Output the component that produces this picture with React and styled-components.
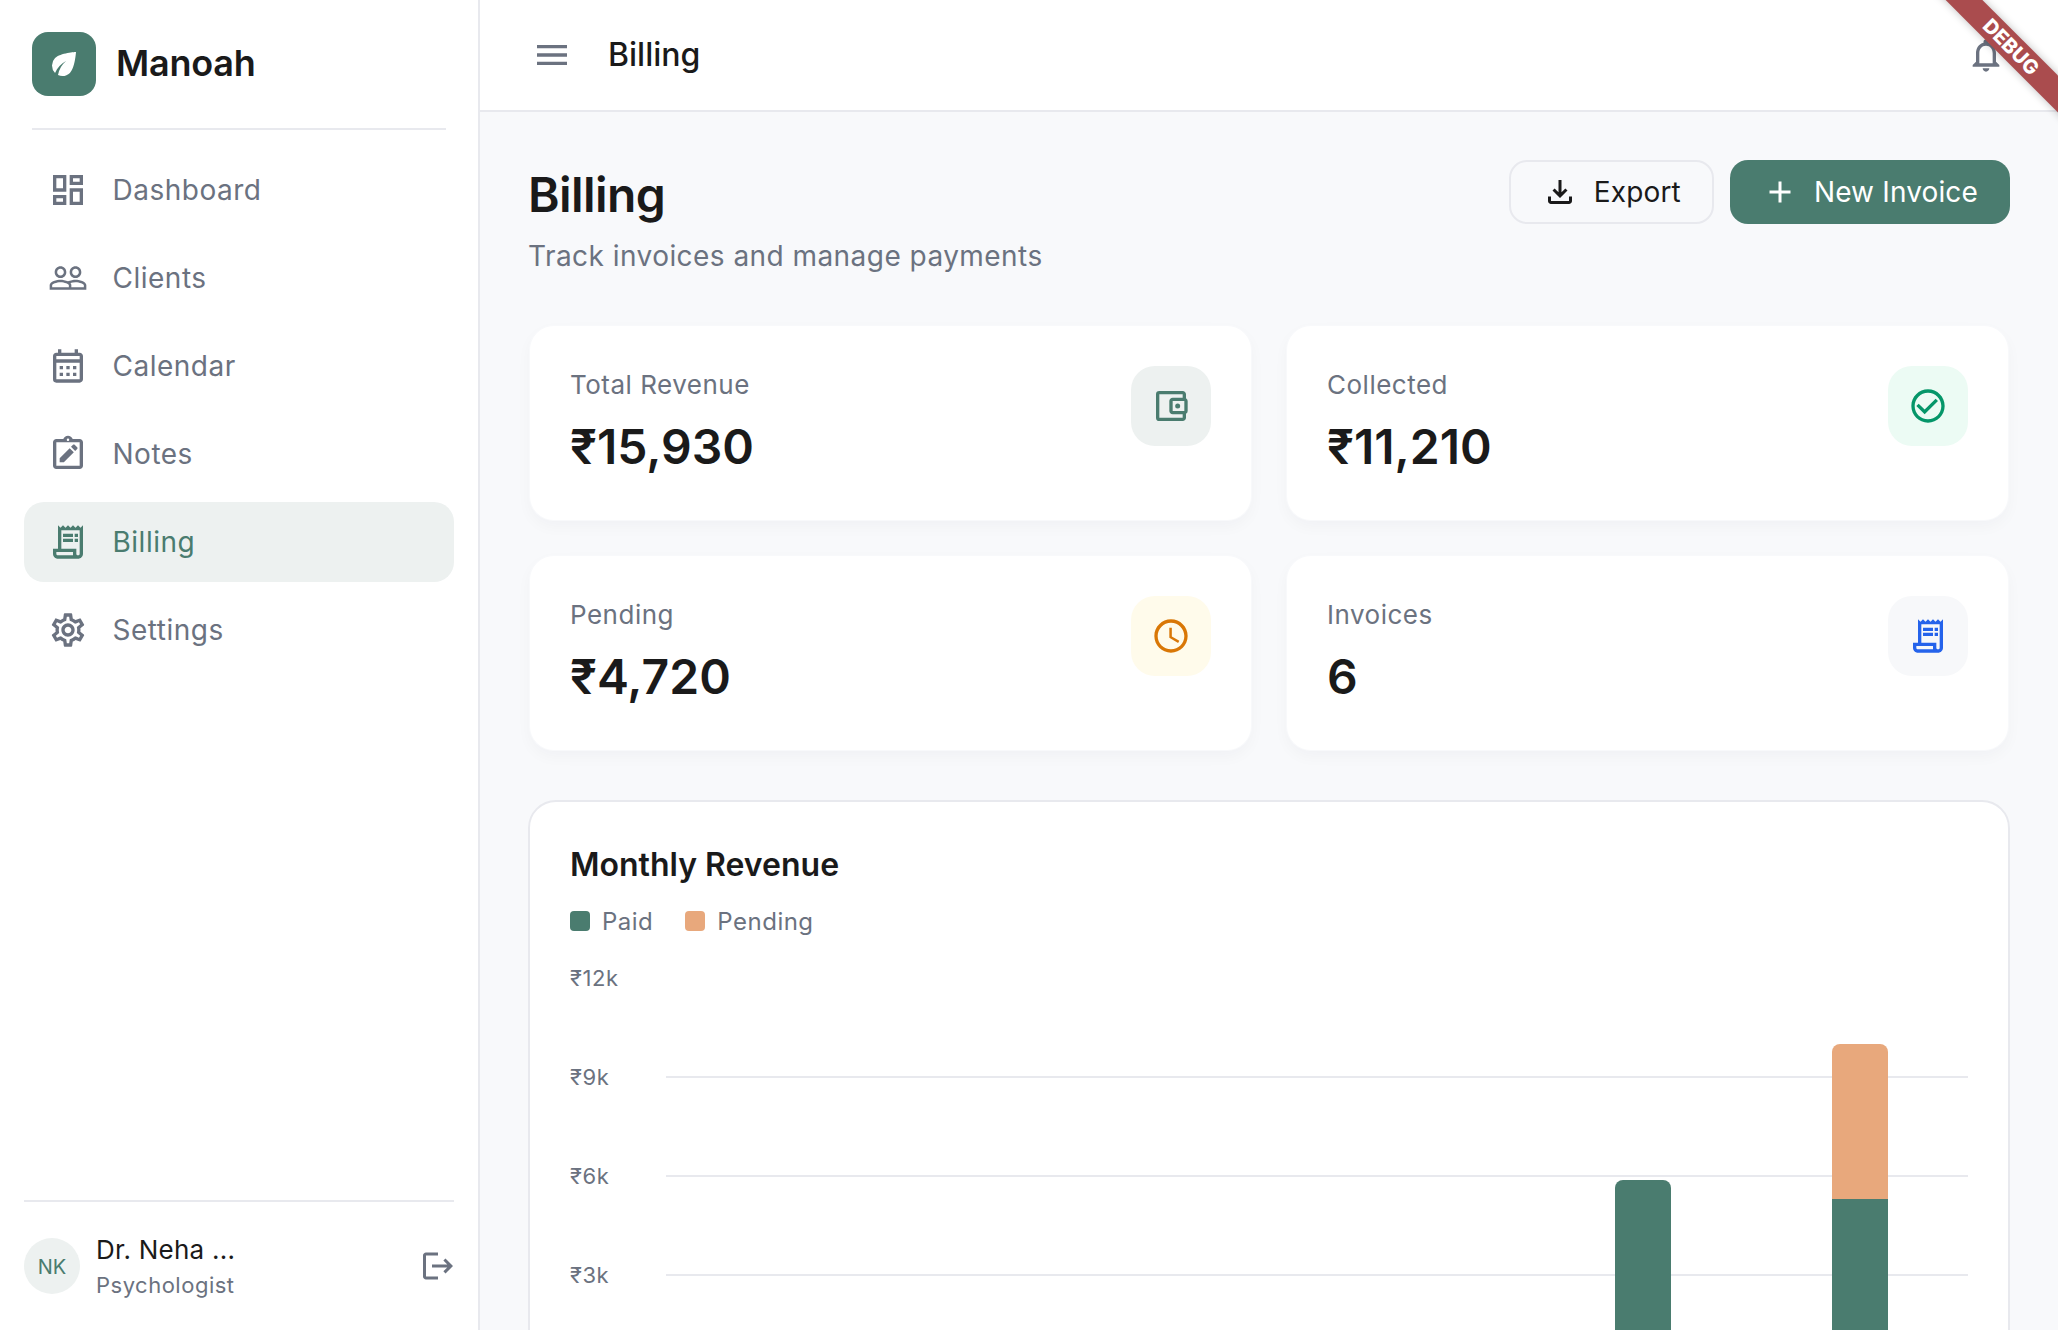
import React from 'react';
import styled, { createGlobalStyle } from 'styled-components';
import {
  MdOutlineDashboard,
  MdPeopleOutline,
  MdOutlineCalendarMonth,
  MdOutlineReceiptLong,
  MdOutlineSettings,
  MdLogout,
  MdMenu,
  MdOutlineNotifications,
  MdOutlineFileDownload,
  MdAdd,
  MdOutlineAccountBalanceWallet,
  MdCheckCircleOutline,
  MdAccessTime,
  MdEco,
} from 'react-icons/md';

const GlobalStyle = createGlobalStyle`
  html, body { margin: 0; padding: 0; background: #f8f9fb; }
  * { box-sizing: border-box; }
  body { font-family: Inter, "Noto Sans", sans-serif; color: #1a1a1a; }
`;

const Shell = styled.div`
  position: relative;
  display: flex;
  width: 100vw;
  height: 100vh;
  overflow: hidden;
`;

const Sidebar = styled.aside`
  flex: 0 0 480px;
  display: flex;
  flex-direction: column;
  background: #fff;
  border-right: 2px solid #e8e9ee;
`;

const Brand = styled.div`
  display: flex;
  align-items: center;
  gap: 20px;
  margin: 0 32px;
  padding: 32px 0;
  border-bottom: 2px solid #e8e9ee;
  height: 130px;
`;

const LogoMark = styled.div`
  width: 64px;
  height: 64px;
  border-radius: 16px;
  background: #4a7c6f;
  color: #fff;
  display: flex;
  align-items: center;
  justify-content: center;
  font-size: 36px;
`;

const BrandName = styled.span`
  margin-bottom: 2px;
  font-size: 36px;
  font-weight: 600;
  letter-spacing: -0.2px;
  color: #1a1a1a;
`;

const Nav = styled.nav`
  flex: 1;
  display: flex;
  flex-direction: column;
  gap: 8px;
  padding: 20px 24px;
`;

const NavItem = styled.a`
  height: 80px;
  display: flex;
  align-items: center;
  gap: 24.5px;
  padding: 0 24px;
  border-radius: 20px;
  font-size: 28px;
  letter-spacing: 0.5px;
  color: ${({ $active }) => ($active ? '#4a7c6f' : '#6b7280')};
  background: ${({ $active }) => ($active ? '#edf1f0' : 'transparent')};
  svg {
    flex: 0 0 40px;
  }
`;

const UserFooter = styled.div`
  flex: 0 0 130px;
  margin: 0 24px;
  border-top: 2px solid #e8e9ee;
  display: flex;
  align-items: center;
  gap: 16px;
`;

const Avatar = styled.div`
  flex: 0 0 56px;
  height: 56px;
  border-radius: 50%;
  background: #edf1f0;
  color: #4a7c6f;
  font-size: 20px;
  padding-top: 1px;
  display: flex;
  align-items: center;
  justify-content: center;
`;

const UserText = styled.div`
  flex: 1;
  display: flex;
  flex-direction: column;
  gap: 3px;
  padding-top: 1px;
`;

const UserName = styled.div`
  font-size: 26px;
  line-height: 34px;
  letter-spacing: 0.25px;
  color: #1a1a1a;
`;

const UserRole = styled.div`
  font-size: 22px;
  line-height: 30px;
  letter-spacing: 0.5px;
  color: #6b7280;
`;

const LogoutButton = styled.button`
  margin-right: -2px;
  border: 0;
  background: none;
  padding: 0;
  display: flex;
  color: #6b7280;
`;

const Main = styled.main`
  flex: 1;
  min-width: 0;
  display: flex;
  flex-direction: column;
`;

const TopBar = styled.header`
  flex: 0 0 112px;
  display: flex;
  align-items: center;
  padding: 0 52px;
  background: #fff;
  border-bottom: 2px solid #e8e9ee;
  color: #6b7280;
`;

const TopTitle = styled.h2`
  flex: 1;
  margin: 0 0 2px 36px;
  font-size: 32px;
  font-weight: 500;
  color: #1a1a1a;
`;

const Content = styled.div`
  flex: 1;
  padding: 48px 48px 0;
  background: #f8f9fb;
`;

const PageHeader = styled.div`
  display: flex;
  justify-content: space-between;
  align-items: flex-start;
  margin-bottom: 48px;
`;

const PageTitle = styled.h1`
  margin: 1px 0 0;
  font-size: 48px;
  line-height: 68px;
  font-weight: 600;
  letter-spacing: -0.6px;
  color: #1a1a1a;
`;

const PageSub = styled.p`
  margin: 7px 0 0;
  font-size: 28px;
  line-height: 40px;
  letter-spacing: 0.45px;
  color: #6b7280;
`;

const Actions = styled.div`
  display: flex;
  gap: 16px;
`;

const ActionButton = styled.button`
  height: 64px;
  display: flex;
  align-items: center;
  gap: 16px;
  padding: 0 ${({ $primary }) => ($primary ? '32px' : '31px')};
  border-radius: 18px;
  font-family: inherit;
  font-size: 28px;
  letter-spacing: 0.15px;
  border: ${({ $primary }) => ($primary ? '0' : '2px solid #e8e9ee')};
  background: ${({ $primary }) => ($primary ? '#4a7c6f' : 'transparent')};
  color: ${({ $primary }) => ($primary ? '#fff' : '#1a1a1a')};
`;

const StatGrid = styled.div`
  display: grid;
  grid-template-columns: 1fr 1fr;
  gap: 32px;
  margin-bottom: 48px;
`;

const StatCard = styled.div`
  height: 198px;
  display: flex;
  justify-content: space-between;
  align-items: flex-start;
  padding: 40px;
  background: #fff;
  background-clip: padding-box;
  border: 2px solid transparent;
  border-radius: 26px;
  box-shadow: 0 6px 16px -2px rgba(20, 30, 50, 0.035);
`;

const StatLabel = styled.div`
  font-size: 26px;
  line-height: 38px;
  letter-spacing: 0.5px;
  color: #6b7280;
`;

const StatValue = styled.div`
  margin-top: 13px;
  font-size: 48px;
  line-height: 60px;
  font-weight: 600;
  color: #1a1a1a;
`;

const StatIcon = styled.div`
  width: 80px;
  height: 80px;
  border-radius: 24px;
  display: flex;
  align-items: center;
  justify-content: center;
  background: ${({ $bg }) => $bg};
  color: ${({ $fg }) => $fg};
`;

const ChartCard = styled.section`
  padding: 41px 40px 40px;
  background: #fff;
  border: 2px solid #e8e9ee;
  border-radius: 28px;
`;

const ChartTitle = styled.h3`
  margin: 0;
  font-size: 32px;
  line-height: 44px;
  font-weight: 600;
  color: #1a1a1a;
`;

const Legend = styled.div`
  display: flex;
  gap: 32px;
  margin: 24px 0 -2px;
`;

const LegendItem = styled.div`
  display: flex;
  align-items: center;
  gap: 12px;
  height: 20px;
  font-size: 24px;
  letter-spacing: 0.5px;
  color: #6b7280;
`;

const Swatch = styled.span`
  width: 20px;
  height: 20px;
  border-radius: 4px;
  background: ${({ $color }) => $color};
`;

const Plot = styled.div`
  position: relative;
`;

const GridRow = styled.div`
  height: 99px;
  display: flex;
  align-items: center;
`;

const AxisLabel = styled.span`
  flex: 0 0 96px;
  margin-bottom: 2px;
  font-size: 22px;
  letter-spacing: 0.55px;
  color: #6b7280;
`;

const GridLine = styled.span`
  flex: 1;
  height: 2px;
  margin-bottom: 1px;
  background: ${({ $hidden }) => ($hidden ? 'transparent' : '#e8e9ee')};
`;

const Bars = styled.div`
  position: absolute;
  left: 96px;
  right: 0;
  top: 0;
  height: 445px;
  display: flex;
  align-items: flex-end;
`;

const BarSlot = styled.div`
  flex: 1;
  display: flex;
  flex-direction: column;
  align-items: center;
  justify-content: flex-end;
`;

const BarPart = styled.div`
  width: 56px;
  background: ${({ $color }) => $color};
  &:first-child {
    border-radius: 8px 8px 0 0;
  }
`;

const DebugRibbon = styled.div`
  position: absolute;
  top: 34px;
  right: -103px;
  width: 300px;
  height: 26px;
  transform: rotate(45deg);
  background: #aa4c4e;
  box-shadow: 0 0 8px rgba(0, 0, 0, 0.25);
  color: #fff;
  font-size: 20px;
  font-weight: 800;
  line-height: 26px;
  text-align: center;
`;

const NotesIcon = (props) => (
  <svg viewBox="0 0 24 24" width="40" height="40" fill="currentColor" {...props}>
    <path d="M19 3h-4.18C14.4 1.84 13.3 1 12 1s-2.4.84-2.82 2H5c-1.1 0-2 .9-2 2v14c0 1.1.9 2 2 2h14c1.1 0 2-.9 2-2V5c0-1.1-.9-2-2-2zm-7-.25c.22 0 .41.1.55.25.12.13.2.31.2.5 0 .41-.34.75-.75.75s-.75-.34-.75-.75c0-.19.08-.37.2-.5.14-.15.33-.25.55-.25zM19 19H5V5h14v14z" />
    <path d="M7 17v-2.5l6-6 2.5 2.5-6 6H7zm9.3-6.8l-2.5-2.5 1.2-1.2c.3-.3.7-.3 1 0l1.5 1.5c.3.3.3.7 0 1l-1.2 1.2z" />
  </svg>
);

const navItems = [
  { label: 'Dashboard', icon: <MdOutlineDashboard size={40} /> },
  { label: 'Clients', icon: <MdPeopleOutline size={40} /> },
  { label: 'Calendar', icon: <MdOutlineCalendarMonth size={40} /> },
  { label: 'Notes', icon: <NotesIcon /> },
  { label: 'Billing', icon: <MdOutlineReceiptLong size={40} />, active: true },
  { label: 'Settings', icon: <MdOutlineSettings size={40} /> },
];

const stats = [
  { label: 'Total Revenue', value: '₹15,930', bg: '#edf1f0', fg: '#4a7c6f', icon: <MdOutlineAccountBalanceWallet size={40} /> },
  { label: 'Collected', value: '₹11,210', bg: '#ecfbf4', fg: '#059669', icon: <MdCheckCircleOutline size={40} /> },
  { label: 'Pending', value: '₹4,720', bg: '#fffbeb', fg: '#d97706', icon: <MdAccessTime size={40} /> },
  { label: 'Invoices', value: '6', bg: '#f7f8fa', fg: '#2563eb', icon: <MdOutlineReceiptLong size={40} /> },
];

const ticks = ['₹12k', '₹9k', '₹6k', '₹3k'];

// paid / pending per month, in rupees
const months = [
  { paid: 0, pending: 0 },
  { paid: 0, pending: 0 },
  { paid: 0, pending: 0 },
  { paid: 0, pending: 0 },
  { paid: 5880, pending: 0 },
  { paid: 5300, pending: 4700 },
];

const PX_PER_RUPEE = 33 / 1000;

export default function App() {
  return (
    <>
      <GlobalStyle />
      <Shell>
        <Sidebar>
          <Brand>
            <LogoMark>
              <MdEco />
            </LogoMark>
            <BrandName>Manoah</BrandName>
          </Brand>
          <Nav>
            {navItems.map((item) => (
              <NavItem key={item.label} $active={item.active}>
                {item.icon}
                {item.label}
              </NavItem>
            ))}
          </Nav>
          <UserFooter>
            <Avatar>NK</Avatar>
            <UserText>
              <UserName>Dr. Neha ...</UserName>
              <UserRole>Psychologist</UserRole>
            </UserText>
            <LogoutButton>
              <MdLogout size={36} />
            </LogoutButton>
          </UserFooter>
        </Sidebar>
        <Main>
          <TopBar>
            <MdMenu size={40} />
            <TopTitle>Billing</TopTitle>
            <MdOutlineNotifications size={40} />
          </TopBar>
          <Content>
            <PageHeader>
              <div>
                <PageTitle>Billing</PageTitle>
                <PageSub>Track invoices and manage payments</PageSub>
              </div>
              <Actions>
                <ActionButton>
                  <MdOutlineFileDownload size={36} />
                  Export
                </ActionButton>
                <ActionButton $primary>
                  <MdAdd size={36} />
                  New Invoice
                </ActionButton>
              </Actions>
            </PageHeader>
            <StatGrid>
              {stats.map((stat) => (
                <StatCard key={stat.label}>
                  <div>
                    <StatLabel>{stat.label}</StatLabel>
                    <StatValue>{stat.value}</StatValue>
                  </div>
                  <StatIcon $bg={stat.bg} $fg={stat.fg}>
                    {stat.icon}
                  </StatIcon>
                </StatCard>
              ))}
            </StatGrid>
            <ChartCard>
              <ChartTitle>Monthly Revenue</ChartTitle>
              <Legend>
                <LegendItem>
                  <Swatch $color="#4a7c6f" />
                  Paid
                </LegendItem>
                <LegendItem>
                  <Swatch $color="#e8a87c" />
                  Pending
                </LegendItem>
              </Legend>
              <Plot>
                {ticks.map((tick) => (
                  <GridRow key={tick}>
                    <AxisLabel>{tick}</AxisLabel>
                    <GridLine $hidden={tick === '₹12k'} />
                  </GridRow>
                ))}
                <Bars>
                  {months.map((month, i) => (
                    <BarSlot key={i}>
                      {month.pending > 0 && (
                        <BarPart $color="#e8a87c" style={{ height: month.pending * PX_PER_RUPEE }} />
                      )}
                      {month.paid > 0 && (
                        <BarPart $color="#4a7c6f" style={{ height: month.paid * PX_PER_RUPEE }} />
                      )}
                    </BarSlot>
                  ))}
                </Bars>
              </Plot>
            </ChartCard>
          </Content>
        </Main>
        <DebugRibbon>DEBUG</DebugRibbon>
      </Shell>
    </>
  );
}
